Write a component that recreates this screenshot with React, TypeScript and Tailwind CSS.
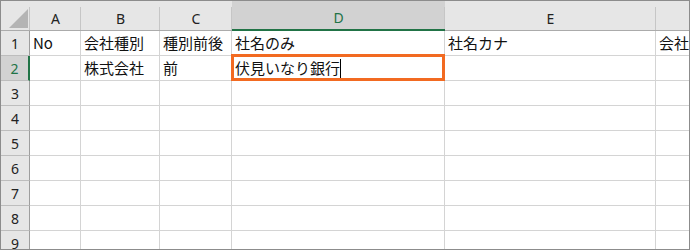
const cols = ["A", "B", "C", "D", "E", ""];

const rows: Record<number, string[]> = {
  1: ["No", "会社種別", "種別前後", "社名のみ", "社名カナ", "会社名"],
  2: ["", "株式会社", "前", "", "", ""],
};

function Corner() {
  return (
    <div className="relative bg-[#e6e6e6] border-b border-b-[#ababab] after:absolute after:right-0 after:top-[6px] after:bottom-0 after:w-px after:bg-[#c6c6c6] after:content-['']">
      <svg className="absolute left-[8px] top-[8px]" width="19" height="19" viewBox="0 0 19 19">
        <polygon points="19,0 19,19 0,19" fill="#b4b4b4" />
      </svg>
    </div>
  );
}

function ColHeader({ label, active }: { label: string; active?: boolean }) {
  return (
    <div
      className={
        active
          ? "relative flex items-center justify-center pt-[5px] bg-[#d2d2d2] border-b-2 border-b-[#217346] text-[#217346] after:absolute after:right-0 after:top-[6px] after:bottom-0 after:w-px after:bg-[#c6c6c6] after:content-['']"
          : "relative flex items-center justify-center pt-[5px] bg-[#e6e6e6] border-b border-b-[#ababab] text-[#222] after:absolute after:right-0 after:top-[6px] after:bottom-0 after:w-px after:bg-[#c6c6c6] after:content-['']"
      }
    >
      {label}
    </div>
  );
}

function RowHeader({ n, active }: { n: number; active?: boolean }) {
  return (
    <div
      className={
        active
          ? "flex items-center justify-center bg-[#d2d2d2] border-b border-b-[#bdbdbd] border-r-2 border-r-[#217346] text-[#217346]"
          : "flex items-center justify-center bg-[#e6e6e6] border-b border-b-[#bdbdbd] border-r border-r-[#9e9e9e] text-[#222]"
      }
    >
      {n}
    </div>
  );
}

export default function App() {
  return (
    <div className="w-[690px] h-[250px] bg-white border border-[#8c8c8c] overflow-hidden">
      <div
        className="grid grid-cols-[29px_51px_79px_72px_213px_211px_1fr] grid-rows-[30px_repeat(9,25px)] text-[14px] whitespace-nowrap"
        style={{ fontFamily: '"Noto Sans", "Noto Sans CJK JP", sans-serif' }}
      >
        <Corner />
        {cols.map((c, i) => (
          <ColHeader key={i} label={c} active={c === "D"} />
        ))}

        {[1, 2, 3, 4, 5, 6, 7, 8, 9].map((r) => (
          <>
            <RowHeader key={"h" + r} n={r} active={r === 2} />
            {cols.map((c, i) => {
              const text = rows[r]?.[i] ?? "";
              const editing = r === 2 && c === "D";
              return (
                <div
                  key={r + "-" + i}
                  className="relative flex items-center pl-[3px] border-b border-r border-[#d4d4d4] text-[15px] text-[#111] overflow-visible"
                  style={{ fontFamily: '"Noto Sans CJK JP", sans-serif' }}
                >
                  {editing ? (
                    <>
                      <span>伏見いなり銀行</span>
                      <span className="inline-block w-px h-[19px] bg-black" />
                      <div className="absolute -left-px -top-[2px] -right-px -bottom-px border-[3px] border-[#f26a21]" />
                    </>
                  ) : (
                    <span>{text}</span>
                  )}
                </div>
              );
            })}
          </>
        ))}
      </div>
    </div>
  );
}
